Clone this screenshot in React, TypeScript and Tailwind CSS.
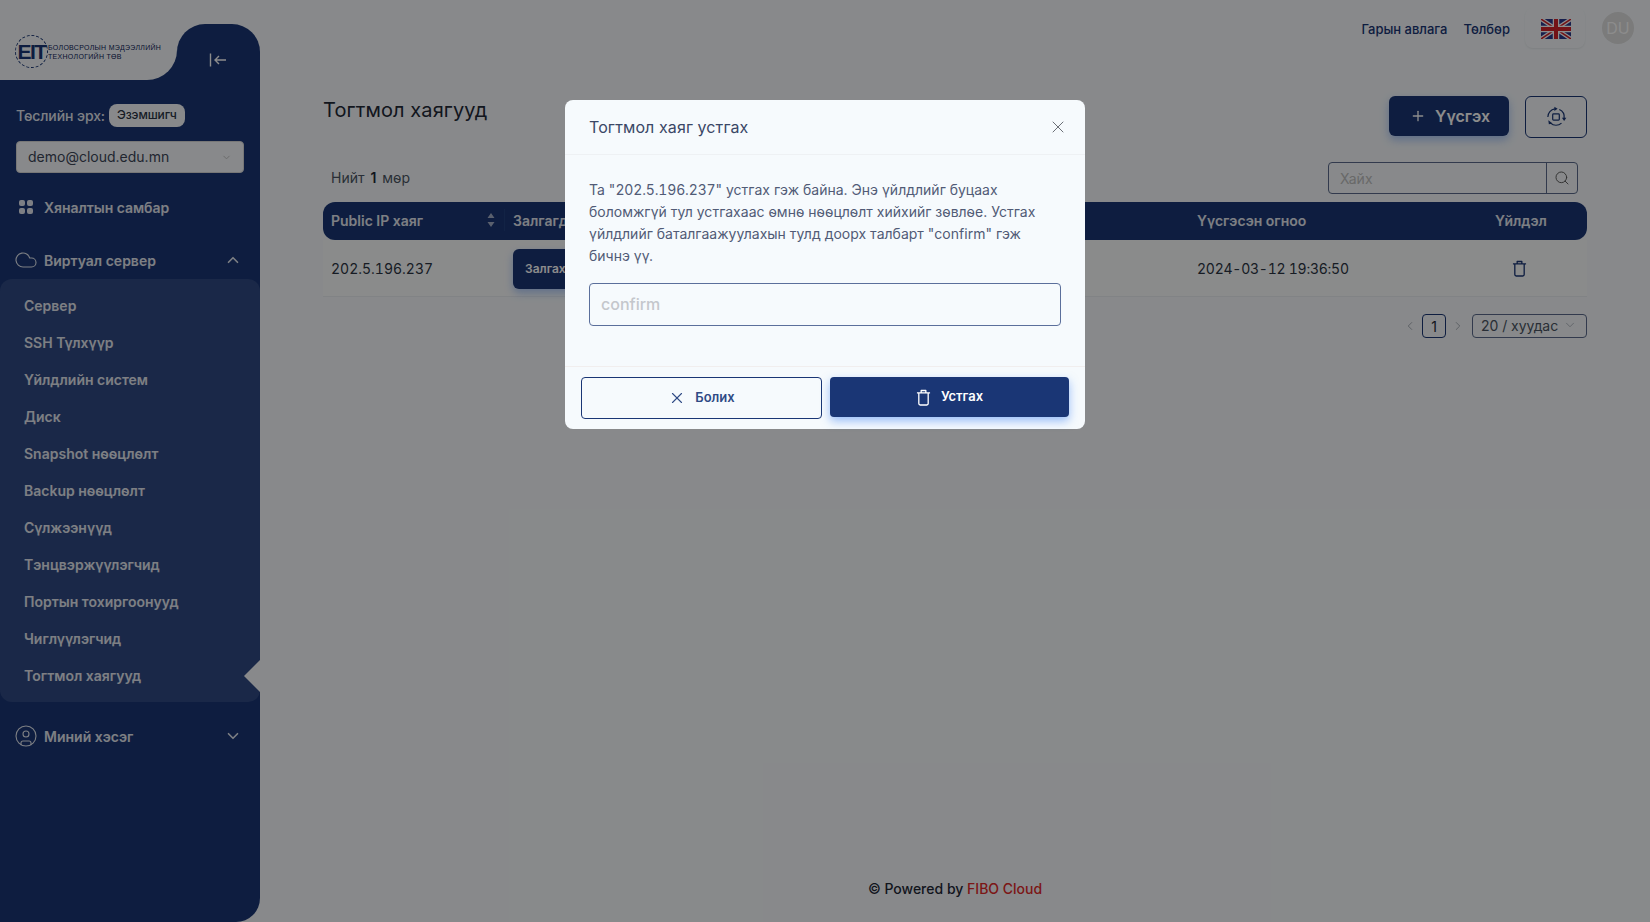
import { ChevronDown, ChevronUp, ChevronLeft, ChevronRight, Cloud, CircleUser, X, Plus, Search } from "lucide-react";

const subItems = ["Сервер","SSH Түлхүүр","Үйлдлийн систем","Диск","Snapshot нөөцлөлт","Backup нөөцлөлт","Сүлжээнүүд","Тэнцвэржүүлэгчид","Портын тохиргоонууд","Чиглүүлэгчид","Тогтмол хаягууд"];

function Trash({ className = "" }: { className?: string }) {
  return (
    <svg viewBox="0 0 16 18" fill="none" stroke="currentColor" strokeWidth="1.4" className={className}>
      <path d="M1 4h14M5.5 4V1.5h5V4M3 4v11.5a1.5 1.5 0 0 0 1.5 1.5h7a1.5 1.5 0 0 0 1.5-1.5V4" strokeLinejoin="round" />
    </svg>
  );
}

function Flag() {
  return (
    <svg viewBox="0 0 60 40" className="w-[30px] h-[20px]">
      <rect width="60" height="40" fill="#2b3a8c" />
      <path d="M0 0L60 40M60 0L0 40" stroke="#fff" strokeWidth="8" />
      <path d="M0 0L60 40M60 0L0 40" stroke="#d2232a" strokeWidth="3" />
      <path d="M30 0V40M0 20H60" stroke="#fff" strokeWidth="13" />
      <path d="M30 0V40M0 20H60" stroke="#d2232a" strokeWidth="8" />
    </svg>
  );
}

function RotateIcon() {
  return (
    <svg viewBox="0 0 20 20" fill="none" stroke="#1a3675" strokeWidth="1.1" className="w-[22px] h-[22px]">
      <rect x="7" y="7.2" width="6" height="5.6" rx="0.8" />
      <path d="M2.6 10A7.5 7.5 0 0 1 9 2.6" />
      <path d="M13 3.2A7.5 7.5 0 0 1 17.4 11" />
      <path d="M15 15.6A7.5 7.5 0 0 1 5 15.6" />
      <path d="M8.5 0.6l3 2-3 2z" fill="#1a3675" stroke="none" />
      <path d="M15.4 10.6l2 3 2-3z" fill="#1a3675" stroke="none" />
      <path d="M3 13l0.5 3.6 3.4-.8z" fill="#1a3675" stroke="none" />
    </svg>
  );
}

function Logo() {
  return (
    <div className="flex items-center">
      <div className="relative w-[33px] h-[33px] rounded-full border border-dashed border-[#1a3675] flex items-center justify-center">
        <span className="text-[21px] leading-none font-bold text-[#1a3675] tracking-[-1.5px] [font-family:'Liberation_Sans',sans-serif]">EIT</span>
      </div>
      <div className="text-[7px] leading-[9px] font-normal text-[#0f2458] tracking-[0.3px] [font-family:'Liberation_Sans',sans-serif] whitespace-nowrap">
        <div>БОЛОВСРОЛЫН МЭДЭЭЛЛИЙН</div>
        <div>ТЕХНОЛОГИЙН ТӨВ</div>
      </div>
    </div>
  );
}

function Sidebar() {
  return (
    <aside className="w-[260px] h-[922px] shrink-0 flex flex-col text-[#e4e8f0]">
      <div className="flex h-20 shrink-0">
        <div className="w-[177px] bg-[#1a3675]">
          <div className="h-full bg-[#f7fafd] rounded-br-[30px] flex items-center pl-[15px] pt-[23px]">
            <Logo />
          </div>
        </div>
        <div className="flex-1 mt-6 bg-[#1a3675] rounded-t-[28px] flex items-center justify-center pt-[16px] pr-[2px]">
          <svg viewBox="0 0 18 14" fill="none" stroke="#fff" strokeWidth="1.4" className="w-[18px] h-[14px]"><path d="M1.5 0.5V13.5M17 7H6M10 3L6 7l4 4" /></svg>
        </div>
      </div>
      <div className="flex-1 bg-[#1a3675] rounded-br-[24px] flex flex-col pt-[23px]">
        <div className="flex items-center pl-4 h-[24px] text-[14px] font-medium">
          <span className="tracking-[-0.1px]">Төслийн эрх:</span>
          <span className="ml-[4px] h-[23px] px-[8px] rounded-[8px] bg-[#f7fafd] text-[#2a3344] text-[12px] tracking-[-0.1px] flex items-center">Эзэмшигч</span>
        </div>
        <div className="mx-4 mt-[14px] h-[32px] rounded-[4px] bg-[#f7fafd] border border-[#d9d9d9] flex items-center justify-between pl-[11px] pr-[11px] text-[14px] text-[#3c4658]">
          <span className="-mt-[1px]">demo@cloud.edu.mn</span>
          <ChevronDown size={11} className="text-[#bfbfbf]" />
        </div>
        <div className="flex items-center h-[24px] mt-[22px] pl-[19px] text-[14px] font-semibold tracking-[-0.05px]">
          <svg viewBox="0 0 14 14" className="w-[14px] h-[14px]" fill="#e4e8f0"><rect width="6" height="6" rx="2" /><rect x="8" width="6" height="6" rx="2" /><rect y="8" width="6" height="6" rx="2" /><rect x="8" y="8" width="6" height="6" rx="2" /></svg>
          <span className="ml-[11px]">Хяналтын самбар</span>
        </div>
        <div className="flex items-center h-[24px] mt-[29px] pl-[14px] pr-[18px] text-[14px] font-semibold">
          <Cloud size={24} strokeWidth={1.1} />
          <span className="ml-[6px] flex-1">Виртуал сервер</span>
          <ChevronUp size={18} strokeWidth={2.2} />
        </div>
        <div className="relative mt-[7px] pt-[8px] pb-[8px] h-[423px] rounded-[12px] bg-[#314a83] flex flex-col">
          {subItems.map((s) => (
            <div key={s} className="h-[37px] shrink-0 flex items-center pl-6 text-[14px] font-semibold">{s}</div>
          ))}
          <div className="absolute right-0 bottom-[10px] w-0 h-0 border-y-[16px] border-y-transparent border-r-[16px] border-r-[#f7fafd]" />
        </div>
        <div className="flex items-center h-[24px] mt-[22px] pl-[14px] pr-[18px] text-[14px] font-semibold">
          <CircleUser size={24} strokeWidth={1.1} />
          <span className="ml-[6px] flex-1">Миний хэсэг</span>
          <ChevronDown size={18} strokeWidth={2.2} />
        </div>
      </div>
    </aside>
  );
}

function Main() {
  return (
    <main className="flex-1 min-w-0 h-[922px] flex flex-col px-[63px]">
      <div className="flex items-center justify-end h-[56px] -mr-[47px] text-[13px] font-medium text-[#1a3675]">
        <span className="pt-[3px]">Гарын авлага</span>
        <span className="ml-[16px] pt-[3px]">Төлбөр</span>
        <div className="ml-[15px] w-[60px] h-[40px] rounded-[8px] shadow-[0_1px_2px_rgba(0,0,0,0.07)] flex items-center justify-center pt-[1px] pl-[1px]"><Flag /></div>
        <div className="ml-[17px] w-[32px] h-[32px] rounded-full bg-[#e0e0e0] text-white flex items-center justify-center text-[16px] font-normal">DU</div>
      </div>
      <div className="flex items-start justify-between mt-[40px]">
        <h1 className="text-[20px] leading-[28px] font-normal text-[#1f2937] tracking-[0.1px]">Тогтмол хаягууд</h1>
        <div className="flex gap-4">
          <div className="w-[120px] h-[40px] rounded-[6px] bg-[#1a3675] shadow-[0_4px_8px_rgba(59,130,246,0.4)] flex items-center justify-center text-white text-[16px] font-semibold pl-[2px]">
            <Plus size={16} strokeWidth={2} />
            <span className="ml-[9px]">Үүсгэх</span>
          </div>
          <div className="w-[62px] h-[42px] rounded-[6px] border border-[#1a3675] flex items-center justify-center"><RotateIcon /></div>
        </div>
      </div>
      <div className="flex items-center justify-between h-[32px] mt-[24px] pl-2 pr-[9px] text-[14px] text-[#4b5563]">
        <span className="-mt-[2px]">Нийт <b className="text-[#1f2937] font-semibold mx-[2px]">1</b> мөр</span>
        <div className="flex w-[250px] h-[32px] rounded-[4px] border border-[#5b6b8c] overflow-hidden">
          <div className="flex-1 pl-[11px] flex items-center text-[#bfbfbf]">Хайх</div>
          <div className="w-[31px] border-l border-[#5b6b8c] flex items-center justify-center pr-[1px]"><Search size={16} strokeWidth={1.4} className="text-[#555]" /></div>
        </div>
      </div>
      <div className="mt-2 h-[38px] pb-[2px] rounded-[12px] bg-[#1a3675] flex items-center text-[14px] font-semibold text-[#e4e8f0]">
        <div className="w-[182px] pl-2 pr-[9px] flex items-center justify-between border-r border-[#22407f] h-[22px]">
          <span>Public IP хаяг</span>
          <svg viewBox="0 0 8 16" className="w-[8px] h-[16px]" fill="#a4b0c8"><path d="M4 1l3.5 5h-7zM4 15l-3.5-5h7z" /></svg>
        </div>
        <div className="w-[684px] pl-2">Залгагдсан</div>
        <div className="w-[299px] pl-2">Үүсгэсэн огноо</div>
        <div className="flex-1 pl-[7px]">Үйлдэл</div>
      </div>
      <div className="h-[57px] border-b border-[#eceff3] bg-[#fcfdfe] flex items-center text-[14px] text-[#2b3442] tabular-nums">
        <div className="w-[182px] pl-2">202.5.196.237</div>
        <div className="w-[684px] pl-2 pt-[1px]">
          <div className="w-[100px] h-[40px] rounded-[6px] bg-[#1a3675] text-white text-[12px] font-semibold flex items-center pl-[12px] shadow-[0_4px_8px_rgba(59,130,246,0.4)]">Залгах</div>
        </div>
        <div className="w-[299px] pl-2 tracking-[-0.25px]">2024-03-12 19:36:50</div>
        <div className="flex-1 pl-[24px] text-[#1a3675]"><Trash className="w-[15px] h-[17px]" /></div>
      </div>
      <div className="flex items-center justify-end h-[24px] mt-[17px] text-[14px] text-[#4b5563]">
        <ChevronLeft size={14} strokeWidth={1.4} className="text-[#9aa0aa]" />
        <div className="ml-[5px] w-[24px] h-[24px] rounded-[4px] border border-[#1a3675] flex items-center justify-center text-[#1f2937]">1</div>
        <ChevronRight size={14} strokeWidth={1.4} className="ml-[5px] text-[#9aa0aa]" />
        <div className="ml-[7px] w-[115px] h-[24px] rounded-[4px] border border-[#5b6b8c] flex items-center justify-between pl-[8px] pr-[9px] pb-[1px]">
          <span className="tracking-[-0.05px]">20 / хуудас</span>
          <ChevronDown size={14} strokeWidth={1.2} className="text-[#9aa0aa] -mt-[2px]" />
        </div>
      </div>
      <div className="mt-auto h-[46px] flex justify-center pt-[1px] text-[14px] font-medium text-[#1f2937]">
        <span className="leading-[24px]">© Powered by <span className="text-[#e22a2a]">FIBO Cloud</span></span>
      </div>
    </main>
  );
}

function Modal() {
  return (
    <div className="absolute inset-0 bg-black/45">
      <div className="absolute left-[565px] top-[100px] w-[520px] h-[329px] rounded-[8px] bg-[#f6fafd] flex flex-col">
        <div className="h-[55px] shrink-0 border-b border-[#eef1f4] flex items-center justify-between pl-[24px] pr-[17px] text-[16px] text-[#3a4766]">
          <span className="font-normal tracking-[0.1px]">Тогтмол хаяг устгах</span>
          <X size={20} strokeWidth={1.2} className="text-[#6b6f76]" />
        </div>
        <div className="flex-1 px-[24px] pt-[24px]">
          <p className="text-[14px] leading-[22px] text-[#515b76] tracking-[0.01px]">
            Та "<span className="tabular-nums tracking-[-0.15px]">202.5.196.237</span>" устгах гэж байна. Энэ үйлдлийг буцаах боломжгүй тул устгахаас өмнө нөөцлөлт хийхийг зөвлөе. Устгах үйлдлийг баталгаажуулахын тулд доорх талбарт "confirm" гэж бичнэ үү.
          </p>
          <div className="mt-[16px] h-[43px] rounded-[4px] border border-[#5b6f9b] flex items-center pl-[11px] pb-[2px] text-[16px] font-medium text-[#c4c7cc]">confirm</div>
        </div>
        <div className="h-[63px] shrink-0 border-t border-[#f1eeee] flex items-start gap-2 pt-[10px] pl-[16px] pr-[16px]">
          <div className="w-[241px] h-[42px] rounded-[4px] border border-[#1a3675] flex items-center justify-center text-[13px] font-semibold text-[#2f4a85]">
            <X size={18} strokeWidth={1.5} />
            <span className="ml-[9px]">Болих</span>
          </div>
          <div className="w-[239px] h-[40px] rounded-[4px] bg-[#1a3675] shadow-[0_4px_10px_rgba(59,130,246,0.5)] flex items-center justify-center text-[13px] font-semibold text-white">
            <Trash className="w-[15px] h-[17px]" />
            <span className="ml-[10px] -mt-[1px]">Устгах</span>
          </div>
        </div>
      </div>
    </div>
  );
}

export default function App() {
  return (
    <div className="relative w-[1650px] h-[922px] overflow-hidden flex bg-[#f7fafd] [font-family:Inter,'Noto_Sans',sans-serif]">
      <Sidebar />
      <Main />
      <Modal />
    </div>
  );
}
